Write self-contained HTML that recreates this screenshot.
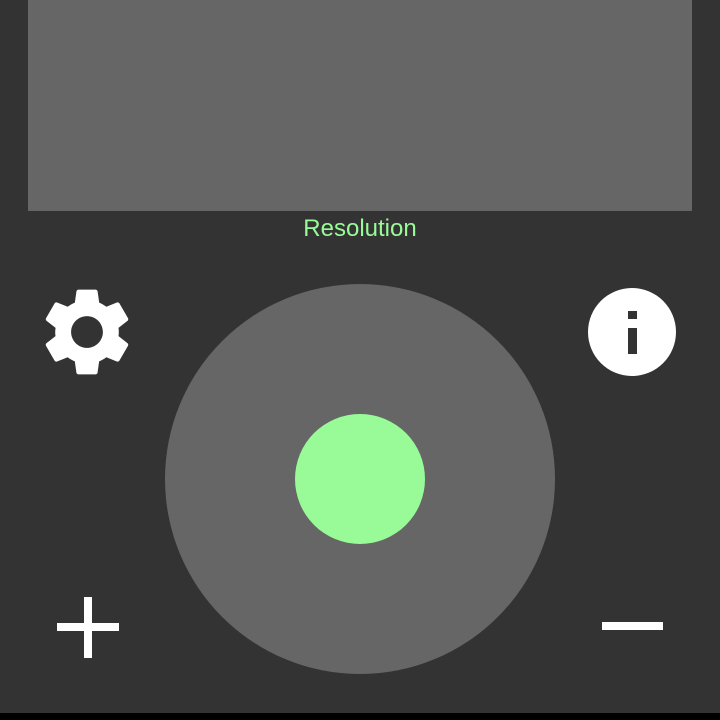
<!DOCTYPE html>
<html><head><style>
html,body{margin:0;padding:0;}
body{width:720px;height:720px;background:#333;position:relative;overflow:hidden;font-family:"Liberation Sans",sans-serif;}
.a{position:absolute;}
</style></head><body>
<div class="a" style="left:28px;top:0;width:664px;height:211px;background:#666;"></div>
<div class="a" style="left:0;top:215px;width:720px;text-align:center;color:#98fb98;font-size:24px;line-height:28px;">Resolution</div>
<div class="a" style="left:165px;top:284px;width:390px;height:390px;border-radius:50%;background:#666;"></div>
<div class="a" style="left:295px;top:414px;width:130px;height:130px;border-radius:50%;background:#98fb98;"></div>
<svg class="a" style="left:34px;top:279px" width="106" height="106" viewBox="0 0 24 24"><path fill="#fff" d="M19.14,12.94c0.04-0.3,0.06-0.61,0.06-0.94c0-0.32-0.02-0.64-0.07-0.94l2.03-1.58c0.18-0.14,0.23-0.41,0.12-0.61 l-1.92-3.32c-0.12-0.22-0.37-0.29-0.59-0.22l-2.39,0.96c-0.5-0.38-1.030-0.7-1.62-0.94L14.4,2.81c-0.04-0.24-0.24-0.41-0.48-0.41 h-3.84c-0.24,0-0.43,0.17-0.47,0.41L9.25,5.35C8.66,5.59,8.12,5.92,7.63,6.290L5.24,5.33c-0.22-0.08-0.47,0-0.59,0.22L2.74,8.87 C2.62,9.08,2.66,9.34,2.86,9.48l2.03,1.58C4.84,11.36,4.8,11.69,4.8,12s0.02,0.64,0.07,0.94l-2.03,1.58 c-0.18,0.14-0.23,0.41-0.12,0.61l1.92,3.32c0.12,0.22,0.37,0.29,0.59,0.22l2.39-0.96c0.5,0.38,1.03,0.7,1.62,0.94l0.36,2.54 c0.05,0.24,0.24,0.41,0.48,0.41h3.84c0.24,0,0.44-0.17,0.47-0.41l0.36-2.54c0.59-0.24,1.13-0.56,1.62-0.94l2.39,0.96 c0.22,0.08,0.47,0,0.59-0.22l1.92-3.32c0.12-0.22,0.07-0.47-0.12-0.61L19.14,12.94z M12,15.6c-1.98,0-3.6-1.62-3.6-3.6 s1.62-3.6,3.6-3.6s3.6,1.62,3.6,3.6S13.98,15.6,12,15.6z"/></svg>
<div class="a" style="left:588px;top:288px;width:88px;height:88px;border-radius:50%;background:#fff;"></div>
<div class="a" style="left:628px;top:311px;width:9px;height:8px;background:#333;"></div>
<div class="a" style="left:628px;top:328px;width:9px;height:26px;background:#333;"></div>
<div class="a" style="left:57px;top:623px;width:62px;height:8px;background:#fff;"></div>
<div class="a" style="left:84px;top:597px;width:8px;height:61px;background:#fff;"></div>
<div class="a" style="left:602px;top:622px;width:61px;height:8px;background:#fff;"></div>
<div class="a" style="left:0;top:713px;width:720px;height:7px;background:#000;"></div>
</body></html>
